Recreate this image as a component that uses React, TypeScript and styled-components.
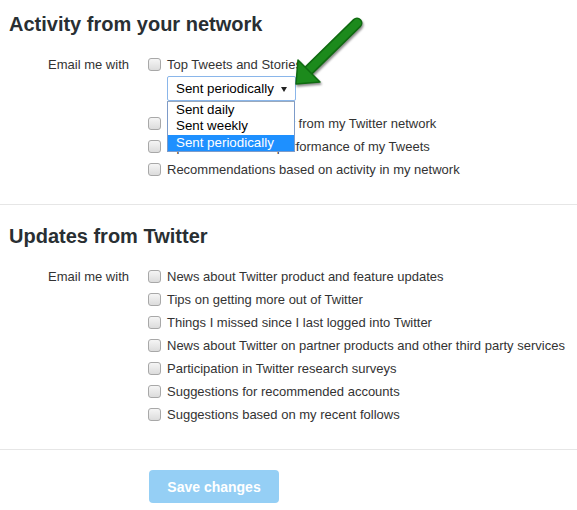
import React, { FC } from "react";
import styled, { createGlobalStyle } from "styled-components";

const GlobalStyle = createGlobalStyle`
  body {
    margin: 0;
    background: #fff;
    font-family: "Liberation Sans", Arial, Helvetica, sans-serif;
    color: #333;
  }
`;

const Page = styled.div`
  position: relative;
  width: 577px;
  height: 510px;
  overflow: hidden;
  background: #fff;
`;

const Section = styled.section<{ $top?: number }>`
  padding: ${(p) => p.$top ?? 19}px 0 23px;
  border-bottom: 1px solid #e6e6e6;
`;

const Heading = styled.h2`
  margin: 0;
  padding-left: 9px;
  font-size: 20px;
  line-height: 24px;
  font-weight: bold;
  color: #292f33;
`;

const FieldGrid = styled.div`
  display: grid;
  grid-template-columns: 129px 1fr;
  column-gap: 19px;
  margin-top: 17px;
  font-size: 13px;
`;

const FieldLabel = styled.div`
  text-align: right;
  line-height: 23px;
`;

const OptionList = styled.div`
  display: flex;
  flex-direction: column;
`;

const CheckRow = styled.label`
  display: flex;
  align-items: center;
  height: 23px;
  white-space: nowrap;
`;

const CheckBox = styled.span`
  box-sizing: border-box;
  width: 13px;
  height: 13px;
  margin-right: 6px;
  border: 1px solid #a8a8a8;
  border-radius: 3px;
  background: linear-gradient(#f5f5f5, #dcdcdc);
  flex: none;
`;

const Picker = styled.div`
  position: relative;
  box-sizing: border-box;
  width: 129px;
  height: 25px;
  margin: 0 0 11px 19px;
  font-size: 13.33px;
  color: #000;
`;

const SelectBox = styled.div`
  box-sizing: border-box;
  display: flex;
  align-items: center;
  justify-content: space-between;
  height: 100%;
  padding: 0 8px;
  border: 1px solid #8ab6ea;
  border-radius: 2px;
  background: #fff;
`;

const Caret = styled.span`
  width: 0;
  height: 0;
  margin-top: 1px;
  border-left: 3px solid transparent;
  border-right: 3px solid transparent;
  border-top: 5px solid #222;
`;

const Menu = styled.ul`
  position: absolute;
  top: 100%;
  left: 0;
  box-sizing: border-box;
  width: 128px;
  margin: 0;
  padding: 0;
  list-style: none;
  border: 1px solid #7d9bc9;
  border-top-color: #9aa9bd;
  background: #fff;
  z-index: 2;
`;

const MenuItem = styled.li<{ $selected?: boolean }>`
  height: 16.4px;
  line-height: 16.4px;
  padding-left: 8px;
  white-space: nowrap;
  background: ${(p) => (p.$selected ? "#1e90ff" : "transparent")};
  color: ${(p) => (p.$selected ? "#fff" : "#000")};
`;

const Actions = styled.div`
  padding: 20px 0 0 149px;
`;

const SaveButton = styled.button`
  box-sizing: border-box;
  width: 130px;
  height: 33px;
  padding: 0;
  border: none;
  border-radius: 4px;
  background: #95cff5;
  color: #fff;
  font-family: "Liberation Sans", Arial, sans-serif;
  font-size: 14px;
  font-weight: bold;
`;

const Pointer = styled.svg`
  position: absolute;
  left: 290px;
  top: 15px;
  filter: drop-shadow(1px 2px 1px rgba(0, 0, 0, 0.45));
`;

const networkItems = [
  "Updates about activity from my Twitter network",
  "Updates about the performance of my Tweets",
  "Recommendations based on activity in my network",
];

const twitterItems = [
  "News about Twitter product and feature updates",
  "Tips on getting more out of Twitter",
  "Things I missed since I last logged into Twitter",
  "News about Twitter on partner products and other third party services",
  "Participation in Twitter research surveys",
  "Suggestions for recommended accounts",
  "Suggestions based on my recent follows",
];

const frequencies = ["Sent daily", "Sent weekly", "Sent periodically"];

const Check: FC<{ text: string }> = ({ text }) => (
  <CheckRow>
    <CheckBox />
    {text}
  </CheckRow>
);

const App: FC = () => (
  <Page>
    <GlobalStyle />

    <Section $top={12}>
      <Heading>Activity from your network</Heading>
      <FieldGrid>
        <FieldLabel>Email me with</FieldLabel>
        <OptionList>
          <Check text="Top Tweets and Stories" />
          <Picker>
            <SelectBox>
              Sent periodically
              <Caret />
            </SelectBox>
            <Menu>
              {frequencies.map((f) => (
                <MenuItem key={f} $selected={f === "Sent periodically"}>
                  {f}
                </MenuItem>
              ))}
            </Menu>
          </Picker>
          {networkItems.map((t) => (
            <Check key={t} text={t} />
          ))}
        </OptionList>
      </FieldGrid>
    </Section>

    <Section>
      <Heading>Updates from Twitter</Heading>
      <FieldGrid>
        <FieldLabel>Email me with</FieldLabel>
        <OptionList>
          {twitterItems.map((t) => (
            <Check key={t} text={t} />
          ))}
        </OptionList>
      </FieldGrid>
    </Section>

    <Actions>
      <SaveButton disabled>Save changes</SaveButton>
    </Actions>

    {/* green annotation arrow pointing at the dropdown */}
    <Pointer width="75" height="75" viewBox="0 0 75 75">
      <line
        x1="18"
        y1="56"
        x2="67"
        y2="8"
        stroke="#0f6a10"
        strokeWidth="11"
        strokeLinecap="round"
      />
      <line
        x1="19"
        y1="55"
        x2="67"
        y2="8"
        stroke="#1c8a1c"
        strokeWidth="8"
        strokeLinecap="round"
      />
      <polygon
        points="6,69 8,45 30,67"
        fill="#1c8a1c"
        stroke="#0f6a10"
        strokeWidth="1.5"
        strokeLinejoin="round"
      />
    </Pointer>
  </Page>
);

export default App;
